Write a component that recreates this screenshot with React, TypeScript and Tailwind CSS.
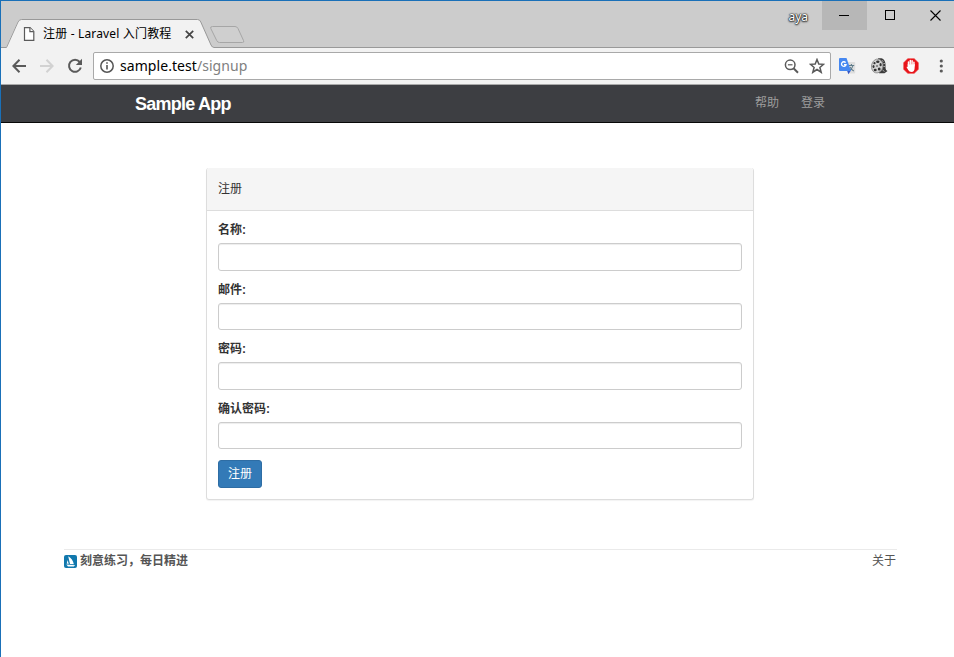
import React from "react";

const ui = "font-['Noto_Sans','Noto_Sans_CJK_SC',sans-serif]";
const cjk = "font-['Liberation_Sans','Noto_Sans_CJK_SC',sans-serif]";

function TitleBar() {
  return (
    <div className="relative flex h-[47px] items-start border-l border-t border-[#1a70b8] bg-[#cccccc]">
      <svg className="absolute left-0 top-0" width="953" height="47" viewBox="1 1 953 47" fill="none">
        <path d="M0 47.500H6L17.500 22Q18.700 19.500 21 19.500H197.500Q199.800 19.500 200.800 22L212 47.500V48H0Z" fill="#f2f2f2" />
        <path d="M0 47.500H6.500L18 22Q19.200 19.500 21.500 19.500H197.500Q199.800 19.500 200.800 22L211 45Q212.200 47.500 214 47.500H954" stroke="#999999" />
        <path d="M212.500 26.500H235Q237 26.500 238 28.500L243.500 40.500Q244.500 42.500 242.500 42.500H219.500Q217.500 42.500 216.700 40.500L210.800 28.500Q210 26.500 212.500 26.500Z" fill="#cfcfcf" stroke="#a6a6a6" />
      </svg>
      <div className={"relative mt-[23px] ml-[22px] flex h-5 w-[175px] items-center text-[12px] text-black " + ui}>
        <svg width="12" height="14" viewBox="0 0 12 14" fill="#fff" stroke="#5a5a5a" strokeWidth="1.2">
          <path d="M1.500 .6H7L10.800 4.500V13.400H1.500Z" />
          <path d="M6.900 .8V4.600H10.600" />
        </svg>
        <span className="ml-[8px] w-[131px] whitespace-nowrap tracking-[0.17px]">注册 - Laravel 入门教程</span>
        <svg className="ml-[11px]" width="9" height="9" viewBox="0 0 9 9" stroke="#444" strokeWidth="1.7">
          <path d="M.8 .8L8.200 8.200M8.200 .8L.8 8.200" />
        </svg>
      </div>
      <div className="ml-auto flex items-start">
        <span className={"mr-[14px] mt-[7px] text-[12px] leading-[18px] text-white [text-shadow:0_0_1px_#222,0_0_2px_#222,0_1px_2px_#222,0_0_1px_#222] " + ui}>aya</span>
        <div className="flex h-[29px] w-[45px] items-center justify-center bg-[#b7b7b7] pr-px">
          <div className="h-px w-[10px] bg-black" />
        </div>
        <div className="flex h-[28px] w-[46px] items-center justify-center">
          <div className="h-[10px] w-[10px] border border-black" />
        </div>
        <div className="flex h-[28px] w-[41px] items-center justify-center pl-[4px]">
          <svg width="11" height="11" viewBox="0 0 11 11" stroke="#000" strokeWidth="1.1">
            <path d="M.5 .5L10.500 10.500M10.500 .5L.5 10.500" />
          </svg>
        </div>
      </div>
    </div>
  );
}

function TranslateIcon() {
  return (
    <svg width="17" height="17" viewBox="0 0 17 17">
      <path d="M6 4H15.500Q16.200 4 16.200 5V14.500Q16.200 15.500 15.200 15.500H9.500Z" fill="#dedede" />
      <path d="M9.500 7.500H15.200M12.400 6V7.500M14 7.500Q13.200 11 10 13M11 9Q12.500 12 14.800 13" stroke="#607d8b" strokeWidth="1.100" fill="none" />
      <path d="M8 12.500H12L9.400 16.300Z" fill="#3556c5" />
      <path d="M1 0H7.500L12 13H1Q0 13 0 12V1Q0 0 1 0Z" fill="#4688f1" />
      <path d="M6.600 4.600A2.300 2.300 0 1 0 7 6.700H5" stroke="#fff" strokeWidth="1.300" fill="none" />
    </svg>
  );
}

function ReelIcon() {
  return (
    <svg width="17" height="16" viewBox="0 0 17 16">
      <path d="M7 .3H10.500C14 1.500 14.800 5 14.500 9C14.500 12 15.500 12.500 16.500 13L13.500 15.300H8Z" fill="#3c3c3c" />
      <path d="M11 2.500L12.500 3.500M12.300 5.500L14 5.500M12.300 8.500L14 8.500M11.500 12L13.500 13.500" stroke="#aaa" />
      <ellipse cx="6.200" cy="8" rx="5.700" ry="7" fill="#d2d2d2" stroke="#888" strokeWidth=".8" transform="rotate(12 6.200 8)" />
      <g fill="#333">
        <ellipse cx="6.800" cy="3.800" rx="1.700" ry="1.200" />
        <ellipse cx="9.600" cy="6.700" rx="1.100" ry="1.600" />
        <ellipse cx="8.200" cy="11" rx="1.400" ry="1.600" />
        <ellipse cx="4.200" cy="12" rx="1.500" ry="1.200" />
        <ellipse cx="2.500" cy="8.500" rx="1" ry="1.500" />
        <ellipse cx="3.500" cy="5.200" rx="1.100" ry="1.100" />
        <circle cx="6" cy="8" r=".8" />
      </g>
    </svg>
  );
}

function BlockIcon() {
  return (
    <svg width="16" height="16" viewBox="0 0 16 16">
      <path d="M4.800 .5H11.200L15.500 4.800V11.200L11.200 15.500H4.800L.5 11.200V4.800Z" fill="#e8141a" stroke="#f06a6a" strokeWidth=".6" />
      <path d="M5.500 8V4M7.300 7.500V2.600M9.100 7.500V2.800M10.900 8V4.300" stroke="#fff" strokeWidth="1.500" strokeLinecap="round" />
      <path d="M4.750 6H11.650V10Q11.500 14 8.500 14Q6.300 14 5.200 12L3.600 9.200Q4 8 4.800 9Z" fill="#fff" />
      <path d="M6.400 4.500V7M8.200 4V7M10 4.500V7" stroke="#f3a0a0" strokeWidth=".4" />
    </svg>
  );
}

function Toolbar() {
  return (
    <div className="flex h-[38px] items-center border-b border-[#a9a9a9] bg-[#f2f2f2] pt-px">
      <svg className="ml-[11px]" width="14" height="14" viewBox="0 0 14 14" fill="none" stroke="#5a5a5a" strokeWidth="2">
        <path d="M7.500 .8L1.400 7L7.500 13.200M1.500 7H14" />
      </svg>
      <svg className="ml-[14px]" width="14" height="14" viewBox="0 0 14 14" fill="none" stroke="#d2d2d2" strokeWidth="2">
        <path d="M6.500 .8L12.600 7L6.500 13.200M12.500 7H0" />
      </svg>
      <svg className="ml-[13px]" width="16" height="16" viewBox="0 0 16 16" fill="none" stroke="#5a5a5a" strokeWidth="2">
        <path d="M12.700 4A6 6 0 1 0 13.800 9.500" />
        <path d="M15 .8V7H8.800Z" fill="#5a5a5a" stroke="none" />
      </svg>
      <div className="ml-[10px] flex h-[28px] w-[738px] items-center rounded-[2px] border border-[#a9a9a9] bg-white">
        <svg className="ml-[6px]" width="14" height="14" viewBox="0 0 14 14" fill="none" stroke="#555">
          <circle cx="7" cy="7" r="6.200" strokeWidth="1.500" />
          <path d="M7 6V10.500M7 3.200V4.800" strokeWidth="1.600" />
        </svg>
        <span className={"ml-[6px] w-[128px] whitespace-nowrap text-[14px] leading-5 tracking-[0.06px] text-black " + ui}>
          sample.test<span className="text-[#808080]">/signup</span>
        </span>
        <svg className="ml-auto" width="15" height="15" viewBox="0 0 15 15" fill="none" stroke="#5a5a5a">
          <circle cx="6.200" cy="5.800" r="4.800" strokeWidth="1.500" />
          <path d="M9.500 9.200L14 13.800" strokeWidth="2" />
          <path d="M3.900 5.800H8.500" strokeWidth="1.200" />
        </svg>
        <svg className="ml-[10px] mr-[5px]" width="16" height="16" viewBox="0 0 16 16" fill="none" stroke="#5a5a5a" strokeWidth="1.500">
          <path d="M8 1.500L9.800 6L14.600 6.300L10.900 9.400L12.200 14.200L8 11.500L3.800 14.200L5.100 9.400L1.400 6.300L6.200 6Z" />
        </svg>
      </div>
      <div className="ml-[8px] flex items-center">
        <TranslateIcon />
        <div className="ml-[15px]"><ReelIcon /></div>
        <div className="ml-[15px]"><BlockIcon /></div>
        <svg className="ml-[20px]" width="4" height="14" viewBox="0 0 4 14" fill="#5a5a5a">
          <circle cx="2.300" cy="2" r="1.600" />
          <circle cx="2.300" cy="7" r="1.600" />
          <circle cx="2.300" cy="12" r="1.600" />
        </svg>
      </div>
    </div>
  );
}

function Field({ label }: { label: string }) {
  return (
    <div className="mb-[11px]">
      <label className="mb-1 block h-[17px] text-[12px] font-bold leading-[17px] text-[#333]">{label}</label>
      <input className="block h-[27.5px] w-full rounded-[3px] border border-[#cccccc] bg-white px-2 shadow-[inset_0_1px_1px_rgba(0,0,0,0.075)] outline-none" />
    </div>
  );
}

export default function App() {
  return (
    <div className="flex h-[657px] w-[954px] flex-col overflow-hidden bg-white">
      <TitleBar />
      <div className="flex flex-1 flex-col border-l border-[#1a70b8]">
        <Toolbar />
        <nav className={"flex h-[38px] items-center border-b border-[#080808] bg-[#3d3e42] pl-[134px] " + cjk}>
          <a className="text-[18px] font-bold leading-5 tracking-[-0.75px] text-white">Sample App</a>
          <div className="ml-auto mr-[129px] flex gap-[22px] pb-[2px] text-[12px] leading-4 text-[#9d9d9d]">
            <a>帮助</a>
            <a>登录</a>
          </div>
        </nav>
        <main className={"ml-[205px] mt-[45px] w-[548px] rounded-[3px] border border-t-0 border-[#dddddd] shadow-[0_1px_1px_rgba(0,0,0,0.05)] " + cjk}>
          <h5 className="flex h-[43px] items-center rounded-t-[3px] border-b border-[#dddddd] bg-[#f5f5f5] px-[11px] text-[12px] text-[#333]">注册</h5>
          <form className="p-[11px]" onSubmit={(e) => e.preventDefault()}>
            <Field label="名称:" />
            <Field label="邮件:" />
            <Field label="密码:" />
            <Field label="确认密码:" />
            <button className="block h-[28px] w-[44px] rounded-[3px] border border-[#2e6da4] bg-[#337ab7] text-[12px] leading-4 text-white">注册</button>
          </form>
        </main>
        <footer className={"ml-[63px] mt-[49px] flex w-[833px] items-start border-t border-[#eaeaea] pt-[3px] text-[12px] leading-4 text-[#555] " + cjk}>
          <svg className="mr-[3px] mt-[2px]" width="13" height="13" viewBox="0 0 13 13">
            <rect width="13" height="13" rx="2" fill="#1178ad" />
            <path d="M4.200 1.300Q8.800 4 9.800 9.300L6 9ZM3.700 5L4.700 8.900L2.700 8.600ZM2.300 9.600L11.200 10.200L9.800 11.400H4Z" fill="#fff" />
          </svg>
          <span className="font-bold">刻意练习，每日精进</span>
          <a className="ml-auto mr-px">关于</a>
        </footer>
      </div>
    </div>
  );
}
